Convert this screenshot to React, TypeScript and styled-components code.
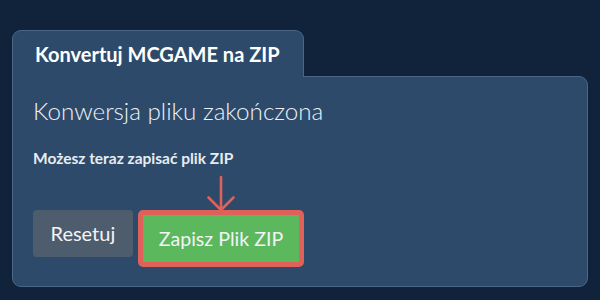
import React from "react";
import styled, { createGlobalStyle } from "styled-components";

const GlobalStyle = createGlobalStyle`
  html, body {
    margin: 0;
    padding: 0;
    background: #11233a;
    width: 600px;
    height: 300px;
    overflow: hidden;
  }
  * { box-sizing: border-box; }
`;

const Page = styled.div`
  padding: 30px 12px 0 12px;
  font-family: Lato, "Open Sans", sans-serif;
  color: #e8ecf1;
`;

const Card = styled.div`
  display: flex;
  flex-direction: column;
  width: 576px;
`;

const Tab = styled.div`
  align-self: flex-start;
  width: 292px;
  height: 47px;
  margin-bottom: -1px;
  position: relative;
  z-index: 1;
  padding: 11px 22px 0 22px;
  background: #2d4a6a;
  border: 1px solid #4b6786;
  border-bottom: none;
  border-radius: 9px 9px 0 0;
  font-size: 20px;
  font-weight: 700;
  color: #ffffff;
  white-space: nowrap;
`;

const Panel = styled.div`
  height: 211px;
  padding: 19px 20px 0 20px;
  background: #2d4a6a;
  border: 1px solid #4b6786;
  border-radius: 0 9px 9px 9px;
`;

const Heading = styled.h2`
  margin: 0 0 24px 0;
  font-size: 24.2px;
  font-weight: 300;
  color: #eef1f4;
`;

const Note = styled.p`
  margin: 0 0 42.7px 0;
  font-size: 15.5px;
  font-weight: 700;
  color: #e8ecf1;
`;

const ButtonRow = styled.div`
  display: flex;
  align-items: flex-start;
  gap: 5px;
`;

const Button = styled.button<{ $variant: "reset" | "save" }>`
  display: flex;
  align-items: center;
  justify-content: center;
  height: 47px;
  padding: 0 ${(p) => (p.$variant === "reset" ? "17.5px" : "16px")};
  border: none;
  border-radius: ${(p) => (p.$variant === "reset" ? "4px" : "0")};
  background: ${(p) => (p.$variant === "reset" ? "#4e5d6e" : "#5cb85c")};
  color: #f2f4f6;
  font-family: Lato, "Open Sans", sans-serif;
  font-size: ${(p) => (p.$variant === "reset" ? "20px" : "19.6px")};
  font-weight: 400;
  cursor: pointer;
`;

const Highlight = styled.div`
  position: relative;
  border: 5px solid #e0605a;
  border-radius: 5px;
`;

const Arrow = styled.svg`
  position: absolute;
  left: 50%;
  bottom: calc(100% + 3px);
  transform: translateX(-50%);
  overflow: visible;
`;

export default function App() {
  return (
    <>
      <GlobalStyle />
      <Page>
        <Card>
          <Tab>Konvertuj MCGAME na ZIP</Tab>
          <Panel>
            <Heading>Konwersja pliku zakończona</Heading>
            <Note>Możesz teraz zapisać plik ZIP</Note>
            <ButtonRow>
              <Button $variant="reset">Resetuj</Button>
              <Highlight>
                <Arrow width="30" height="36" viewBox="0 0 30 36">
                  <path
                    d="M15 1 L15 34 M2.5 21.5 L15 34 L27.5 21.5"
                    fill="none"
                    stroke="#e0605a"
                    strokeWidth="2.6"
                    strokeLinecap="round"
                    strokeLinejoin="round"
                  />
                </Arrow>
                <Button $variant="save">Zapisz Plik ZIP</Button>
              </Highlight>
            </ButtonRow>
          </Panel>
        </Card>
      </Page>
    </>
  );
}
